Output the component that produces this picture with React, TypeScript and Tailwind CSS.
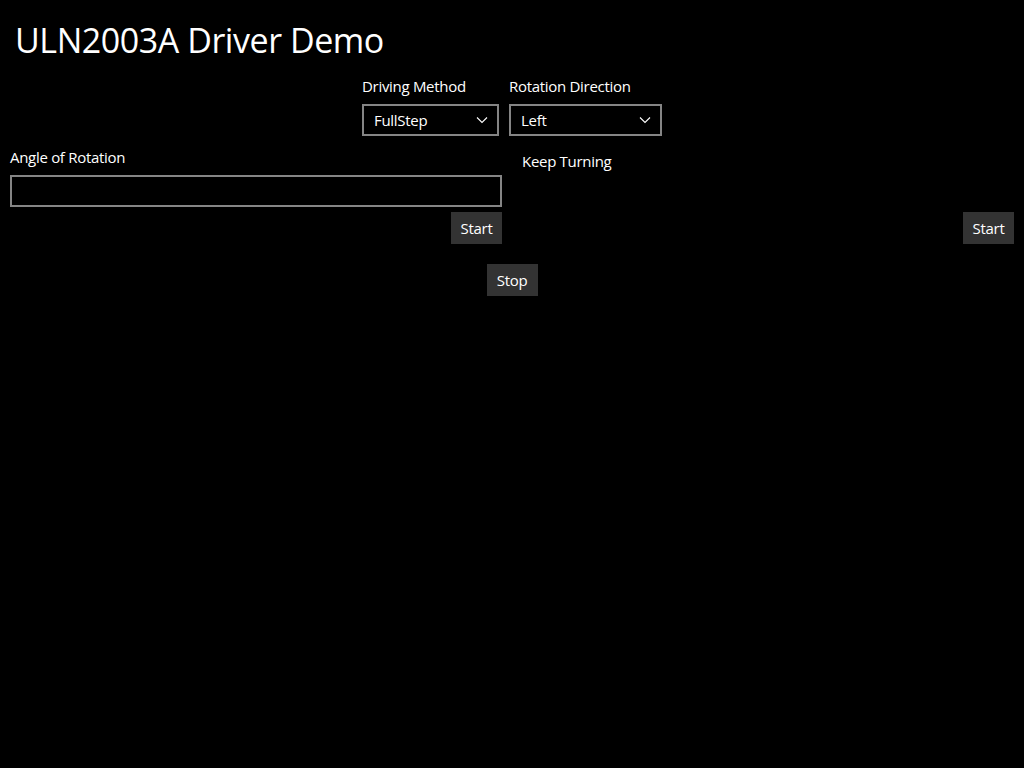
import React from "react";

const font = { fontFamily: '"Open Sans", "Noto Sans", sans-serif' };

function Chevron() {
  return (
    <svg width="12" height="8" viewBox="0 0 12 8" fill="none">
      <path d="M1 1.5 L6 6.5 L11 1.5" stroke="#ffffff" strokeWidth="1.1" />
    </svg>
  );
}

function Combo({ label, value, width }: { label: string; value: string; width: string }) {
  return (
    <div className="flex flex-col">
      <div className="text-[15px] leading-[20px] text-white h-[20px] mb-[8px] tracking-[-0.3px]">{label}</div>
      <div className={`${width} h-[32px] border-2 border-[#858585] flex items-center justify-between pl-[10px] pr-[9px]`}>
        <span className="text-[15px] text-white tracking-[-0.3px]">{value}</span>
        <Chevron />
      </div>
    </div>
  );
}

function Btn({ children }: { children: React.ReactNode }) {
  return (
    <div className="h-[32px] w-[51px] bg-[#333333] flex items-center justify-center text-[15px] text-white tracking-[-0.3px]">
      {children}
    </div>
  );
}

export default function App() {
  return (
    <div className="w-[1024px] h-[768px] bg-black text-white overflow-hidden" style={font}>
      <div className="pl-[15px] pt-[17px] h-[76px]">
        <div className="text-[34px] leading-[46px] tracking-[-0.45px]">ULN2003A Driver Demo</div>
      </div>
      <div className="flex justify-center gap-[10px]">
        <Combo label="Driving Method" value="FullStep" width="w-[137px]" />
        <Combo label="Rotation Direction" value="Left" width="w-[153px]" />
      </div>
      <div className="grid grid-cols-2 mt-[11px]">
        <div className="flex flex-col pl-[10px] pr-[10px]">
          <div className="text-[15px] leading-[20px] h-[20px] mb-[8px] tracking-[-0.3px]">Angle of Rotation</div>
          <div className="h-[32px] border-2 border-[#858585]" />
          <div className="flex justify-end mt-[5px]">
            <Btn>Start</Btn>
          </div>
        </div>
        <div className="flex flex-col pl-[10px] pr-[10px]">
          <div className="text-[15px] leading-[20px] h-[20px] mt-[4px] tracking-[-0.3px]">Keep Turning</div>
          <div className="flex justify-end mt-[41px]">
            <Btn>Start</Btn>
          </div>
        </div>
      </div>
      <div className="flex justify-center mt-[20px]">
        <Btn>Stop</Btn>
      </div>
    </div>
  );
}
